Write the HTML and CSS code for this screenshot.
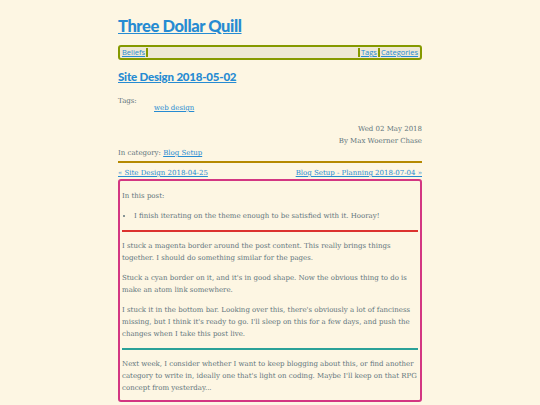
FILE: index.html
```html
<!DOCTYPE html>
<html>
<head>
<meta charset="utf-8">
<link rel="stylesheet" href="styles.css">
</head>
<body>
<div class="page">
  <header class="site-header">
    <h1 class="site-title"><a href="#">Three Dollar Quill</a></h1>
    <nav class="topnav">
      <a href="#" class="nav-link">Beliefs</a>
      <span class="sep"></span>
      <span class="spacer"></span>
      <span class="sep"></span>
      <a href="#" class="nav-link">Tags</a>
      <span class="sep"></span>
      <a href="#" class="nav-link">Categories</a>
    </nav>
  </header>
  <article class="post">
    <h2 class="post-title"><a href="#">Site Design 2018-05-02</a></h2>
    <dl class="tags">
      <dt>Tags:</dt>
      <dd><a href="#">web design</a></dd>
    </dl>
    <div class="meta">
      <div>Wed 02 May 2018</div>
      <div>By Max Woerner Chase</div>
    </div>
    <div class="category">In category: <a href="#">Blog Setup</a></div>
    <hr class="rule yellow">
    <div class="postnav">
      <a href="#">« Site Design 2018-04-25</a>
      <a href="#">Blog Setup - Planning 2018-07-04 »</a>
    </div>
    <div class="content">
      <p class="intro">In this post:</p>
      <ul>
        <li>I finish iterating on the theme enough to be satisfied with it. Hooray!</li>
      </ul>
      <hr class="rule red">
      <p>I stuck a magenta border around the post content. This really brings things together. I should do something similar for the pages.</p>
      <p>Stuck a cyan border on it, and it's in good shape. Now the obvious thing to do is make an atom link somewhere.</p>
      <p>I stuck it in the bottom bar. Looking over this, there's obviously a lot of fanciness missing, but I think it's ready to go. I'll sleep on this for a few days, and push the changes when I take this post live.</p>
      <hr class="rule cyan">
      <p class="last">Next week, I consider whether I want to keep blogging about this, or find another category to write in, ideally one that's light on coding. Maybe I'll keep on that RPG concept from yesterday...</p>
    </div>
  </article>
</div>
</body>
</html>
```
FILE: styles.css
```css
html, body {
  margin: 0;
  padding: 0;
  background: #fdf6e3;
}
body {
  font-family: "DejaVu Serif", serif;
  font-size: 7px;
  line-height: 12px;
  color: #5f757c;
}
a { color: #268bd2; }
.page {
  width: 304px;
  margin: 0 auto;
  padding-top: 14px;
}
.site-title {
  margin: 0;
  font-family: Lato, sans-serif;
  font-size: 16.5px;
  line-height: 24px;
  font-weight: 900;
  letter-spacing: -0.4px;
}
.topnav {
  margin-top: 7px;
  display: flex;
  align-items: stretch;
  border: 2px solid #859900;
  border-radius: 3px;
  background: #eee8d5;
  font-family: "Open Sans", sans-serif;
  font-size: 7.5px;
  line-height: 11px;
  padding: 0 2px;
}
.topnav .spacer { flex: 1; }
.topnav .sep {
  width: 2px;
  background: #859900;
  margin: 1px 1px;
}
.post-title {
  margin: 8px 0 0;
  font-family: Lato, sans-serif;
  font-size: 11.5px;
  line-height: 18px;
  font-weight: 900;
  letter-spacing: -0.2px;
}
.tags { margin: 12px 0 0; }
.tags dt { line-height: 7px; }
.tags dd { margin-left: 36px; line-height: 7px; }
.meta { margin-top: 11px; text-align: right; }
.rule {
  border: 0;
  height: 2px;
  margin: 2px 0 4px;
}
.yellow { background: #b58900; }
.red { background: #dc322f; }
.cyan { background: #2aa198; }
.postnav {
  display: flex;
  justify-content: space-between;
}
.content {
  border: 2px solid #d33682;
  border-radius: 3px;
  padding: 5px 2px 6px;
}
.content p { margin: 8px 0; }
.content p.intro { margin: 4px 0 0; }
.content p.last { margin-bottom: 0; }
.content ul { margin: 8px 0 0; padding-left: 12px; }
.content .rule { margin: 8px 0; }
```
